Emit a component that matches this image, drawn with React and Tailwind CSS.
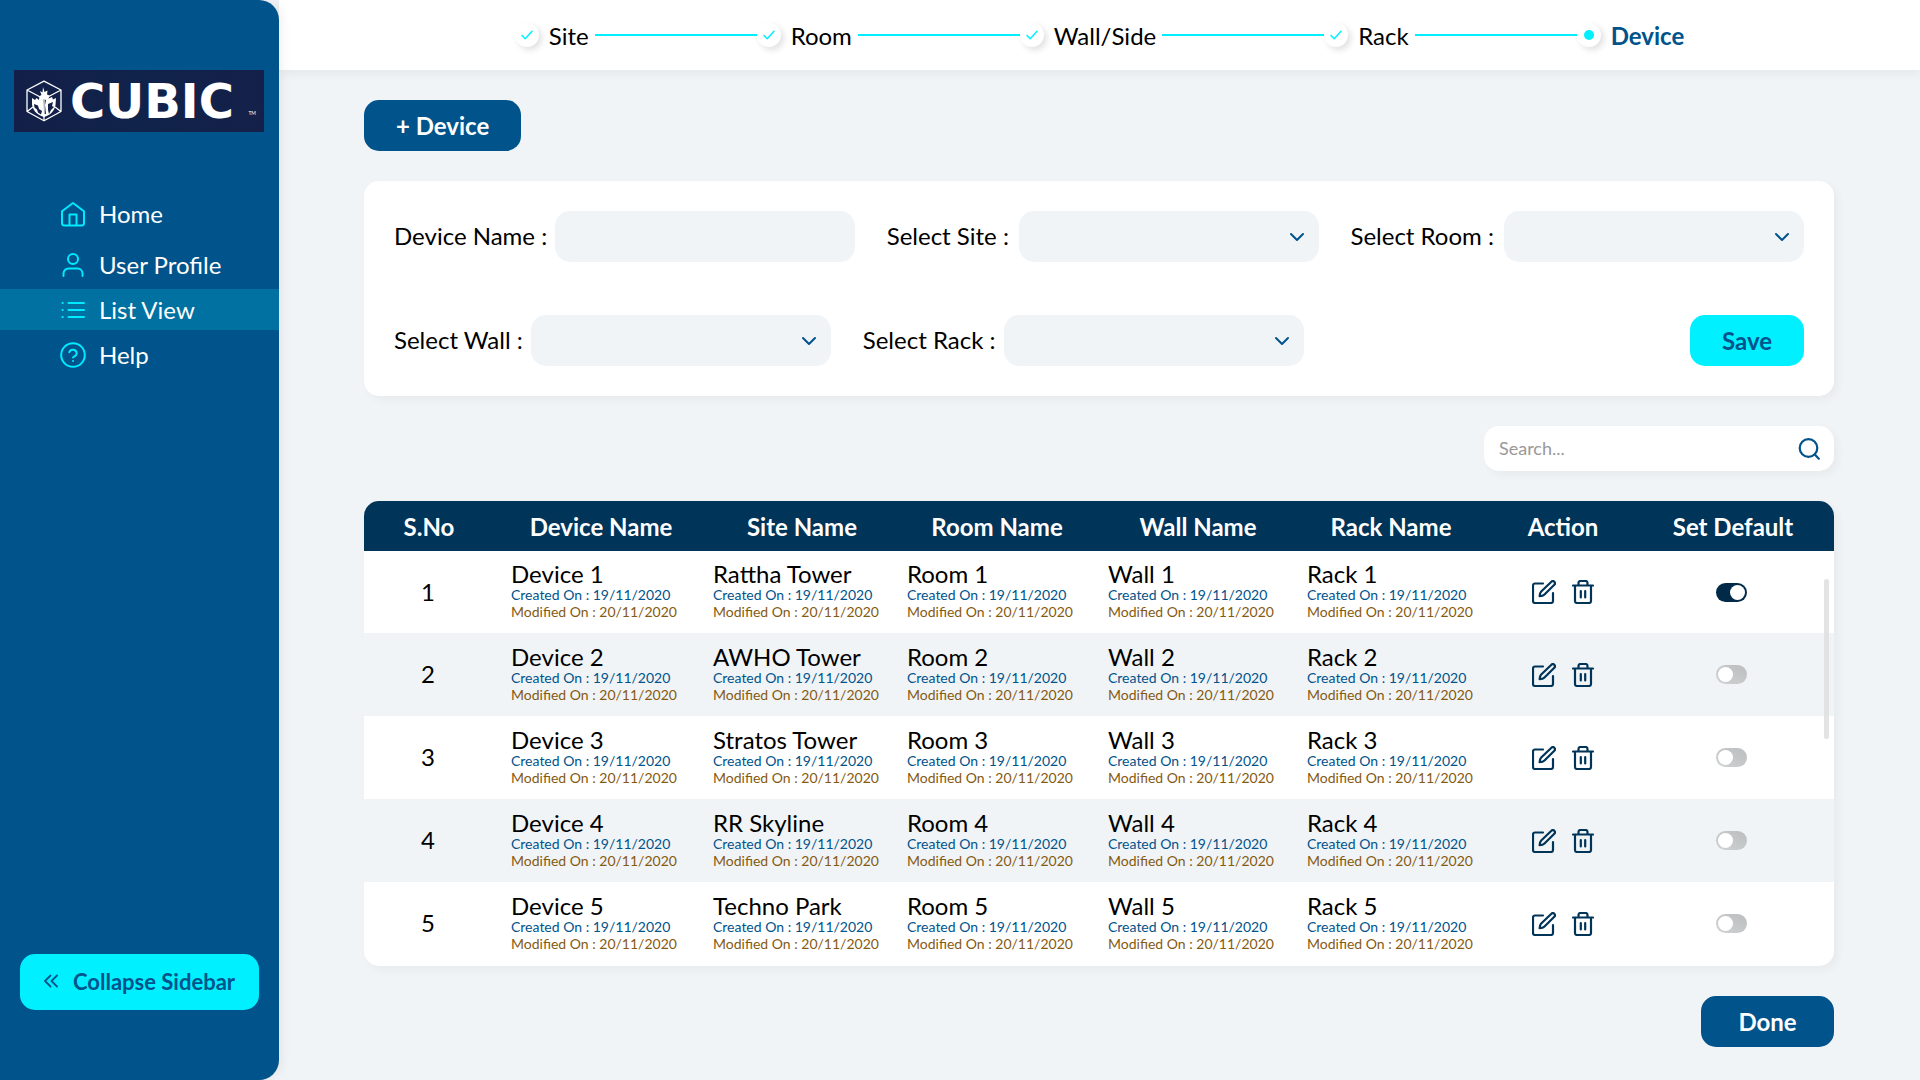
import { useState } from "react";

const steps = ["Site", "Room", "Wall/Side", "Rack", "Device"];

const columns = [
  { title: "S.No", header: "pl-[2px]", width: "w-[128px]" },
  { title: "Device Name", header: "pl-[14px]", width: "w-[204px]" },
  { title: "Site Name", header: "pl-[12px]", width: "w-[200px]" },
  { title: "Room Name", header: "pl-[14px]", width: "w-[188px]" },
  { title: "Wall Name", header: "pl-[14px]", width: "w-[214px]" },
  { title: "Rack Name", header: "pl-[2px]", width: "w-[184px]" },
  { title: "Action", header: "pl-[2px]", width: "w-[160px]" },
  { title: "Set Default", header: "pr-[10px]", width: "w-[192px]" },
];

const sites = ["Rattha Tower", "AWHO Tower", "Stratos Tower", "RR Skyline", "Techno Park"];

function HomeIcon() {
  return (
    <svg viewBox="0 0 26 26" className="size-[26px]" fill="none" stroke="currentColor" strokeWidth="2" strokeLinejoin="round" aria-hidden="true">
      <path d="M2 10.200 13 2l11 8.200V22a2.500 2.500 0 0 1-2.500 2.500h-17A2.500 2.500 0 0 1 2 22z" />
      <path d="M9.500 24.500V13.500h7v11" />
    </svg>
  );
}

function UserIcon() {
  return (
    <svg viewBox="0 0 26 26" className="size-[26px]" fill="none" stroke="currentColor" strokeWidth="2" strokeLinecap="round" aria-hidden="true">
      <circle cx="13" cy="7" r="5" />
      <path d="M3.500 24v-2.500A5 5 0 0 1 8.500 16.500h9a5 5 0 0 1 5 5V24" />
    </svg>
  );
}

function ListIcon() {
  return (
    <svg viewBox="0 0 26 26" className="size-[26px]" fill="none" stroke="currentColor" strokeWidth="2" strokeLinecap="round" aria-hidden="true">
      <path d="M8.500 6H24M8.500 13H24M8.500 20H24M2.500 6h.3M2.500 13h.3M2.500 20h.3" />
    </svg>
  );
}

function HelpIcon() {
  return (
    <svg viewBox="0 0 26 26" className="size-[26px]" fill="none" stroke="currentColor" strokeWidth="2" strokeLinecap="round" strokeLinejoin="round" aria-hidden="true">
      <circle cx="13" cy="13" r="11.800" />
      <path d="M9.300 10.300a3.800 3.800 0 0 1 7.400 1.200c0 2.500-3.700 3.200-3.700 4M13 19h.01" />
    </svg>
  );
}

function EditIcon() {
  return (
    <svg viewBox="0 0 24 24" className="size-6" fill="none" stroke="currentColor" strokeWidth="2.200" strokeLinecap="round" strokeLinejoin="round" aria-hidden="true">
      <path d="M11 3.500H3a2 2 0 0 0-2 2V21a2 2 0 0 0 2 2h16a2 2 0 0 0 2-2v-8" />
      <path d="M19.400 1.800a2 2 0 0 1 2.900 2.900L12.500 14.500c-1 1-3.400 1.600-4.900 1.700.1-1.500.6-3.700 1.600-4.700z" />
    </svg>
  );
}

function TrashIcon() {
  return (
    <svg viewBox="0 0 22 24" className="h-6 w-[22px]" fill="none" stroke="currentColor" strokeWidth="2.200" strokeLinecap="round" strokeLinejoin="round" aria-hidden="true">
      <path d="M1 5.500h20M6.500 5.500V3a2 2 0 0 1 2-2h5a2 2 0 0 1 2 2v2.500M3 5.500V21a2 2 0 0 0 2 2h12a2 2 0 0 0 2-2V5.500M8.800 11v6.500M13.200 11v6.500" />
    </svg>
  );
}

function SearchIcon() {
  return (
    <svg viewBox="0 0 22 22" className="size-[22px]" fill="none" stroke="currentColor" strokeWidth="2.200" strokeLinecap="round" aria-hidden="true">
      <circle cx="10.500" cy="10" r="8.800" />
      <path d="m16.800 16.500 4 4.200" />
    </svg>
  );
}

function CubeMark() {
  return (
    <svg viewBox="0 0 36 42" className="h-[42px] w-9 shrink-0" fill="none" aria-hidden="true">
      <path fill="#fff" d="M18 37c-6-1.500-11-6-12-12.500L6 18l3 2 1.500-2 2.500 2 .5-4 2-1-1.500-4 2.500 1.500L17 7l1.500 5 3-1.500-.5 4 2.500 1-1 3 3.500-1.500 1 2.500L30 18l-.5 7C28.500 31 24 35.500 18 37z" />
      <path fill="#131f48" d="m8 24 4 1.500 1 3.500 3 2-1 3.500-3-2-1-3-2.500-2zM17 19l3 1-1 5 1 9h-2l-.5-9zM22 24l5-2-1 4 2 1-3 3-2 4-1-4z" />
      <path stroke="#fff" strokeWidth="1.300" strokeLinejoin="round" d="M18 1.200 35 10v21.500L18 40.800 1 31.500V10zM1 10l17 9 17-9M18 19v21M1 31.500 7 27M35 31.500 29 27" />
    </svg>
  );
}

function Logo() {
  return (
    <div role="img" aria-label="Cubic" className="ml-[14px] mr-[15px] mt-[70px] flex h-[62px] items-center gap-2 overflow-hidden bg-linear-to-r from-[#131f48] via-[#10234a] to-[#142049] pl-3 pr-2 text-white">
      <CubeMark />
      <span className="font-['DejaVu_Sans','Liberation_Sans',sans-serif] text-5xl font-bold leading-none">CUBIC</span>
      <span className="ml-auto self-end pb-4 text-[5px] leading-none">TM</span>
    </div>
  );
}

const navItems = [
  { label: "Home", icon: HomeIcon, style: "mb-[10px]" },
  { label: "User Profile", icon: UserIcon, style: "mb-1" },
  { label: "List View", icon: ListIcon, style: "mb-1 bg-[#0071a1]", current: true },
  { label: "Help", icon: HelpIcon, style: "" },
];

function Sidebar() {
  return (
    <aside className="z-10 flex w-[279px] shrink-0 flex-col rounded-r-[20px] bg-[#00538b] shadow-[4px_0_10px_rgba(0,0,0,0.05)]">
      <Logo />
      <nav className="mt-[61px]">
        <ul>
          {navItems.map(({ label, icon: Icon, style, current }) => (
            <li key={label} className={style}>
              <a href="#" aria-current={current ? "page" : undefined} className="flex h-[41px] items-center gap-[13px] pl-[60px] text-white">
                <span className="text-[#00eaff]"><Icon /></span>
                {label}
              </a>
            </li>
          ))}
        </ul>
      </nav>
      <button type="button" className="mx-5 mt-auto mb-[70px] flex h-14 items-center gap-[15px] rounded-[15px] bg-[#00f0ff] pb-[2px] pl-6 text-[22px] font-bold text-[#00538b]">
        <svg viewBox="0 0 14 14" className="size-[14px]" fill="none" stroke="currentColor" strokeWidth="1.800" strokeLinecap="round" strokeLinejoin="round" aria-hidden="true">
          <path d="m6.500 1.500-5.500 5.500 5.500 5.500M13 1.500 7.500 7l5.500 5.500" />
        </svg>
        Collapse Sidebar
      </button>
    </aside>
  );
}

function Stepper() {
  return (
    <header className="flex h-[70px] shrink-0 items-center justify-center bg-white shadow-[0_4px_10px_rgba(0,0,0,0.05)]">
      <ol className="flex items-center">
        {steps.map((step, i) => {
          const last = i === steps.length - 1;
          return (
            <li key={step} className="flex items-center">
              <span className="flex size-6 items-center justify-center rounded-full bg-white shadow-[3px_3px_6px_rgba(0,0,0,0.12)]">
                {last ? (
                  <span className="size-[10px] rounded-full bg-[#00f0ff]" />
                ) : (
                  <svg viewBox="0 0 12 10" className="h-[10px] w-3" fill="none" stroke="#00f0ff" strokeWidth="1.500" strokeLinecap="round" strokeLinejoin="round" aria-hidden="true">
                    <path d="M1 5.500 4.200 8.700 11 1.200" />
                  </svg>
                )}
              </span>
              <span className={last ? "ml-[10px] font-bold text-[#00538b]" : "ml-[10px]"}>{step}</span>
              {!last && <span className="ml-[6px] h-[2px] w-[162px] bg-[#00f0ff]" />}
            </li>
          );
        })}
      </ol>
    </header>
  );
}

function SelectField({ id, label, gap = "gap-2" }) {
  return (
    <div className={`flex items-center ${gap}`}>
      <label htmlFor={id} className="pb-[2px]">{label}</label>
      <div className="relative">
        <select id={id} className="block h-[51px] w-[300px] appearance-none rounded-[15px] bg-[#f0f4f7] px-4 pr-10">
          <option></option>
        </select>
        <svg viewBox="0 0 16 10" className="pointer-events-none absolute right-[14px] top-[21px] h-[10px] w-4" fill="none" stroke="#00538b" strokeWidth="2" strokeLinecap="round" strokeLinejoin="round" aria-hidden="true">
          <path d="m2 2 6 6 6-6" />
        </svg>
      </div>
    </div>
  );
}

function DeviceForm() {
  return (
    <form onSubmit={(e) => e.preventDefault()} className="mt-[30px] flex flex-col gap-[53px] rounded-[15px] bg-white p-[30px] shadow-[4px_4px_10px_rgba(0,0,0,0.04)]">
      <div className="flex items-center justify-between">
        <div className="flex items-center gap-2">
          <label htmlFor="device-name" className="pb-[2px]">Device Name :</label>
          <input id="device-name" type="text" className="h-[51px] w-[300px] rounded-[15px] bg-[#f0f4f7] px-4" />
        </div>
        <SelectField id="site" label="Select Site :" gap="gap-[10px]" />
        <SelectField id="room" label="Select Room :" gap="gap-[10px]" />
      </div>
      <div className="flex items-center gap-8">
        <SelectField id="wall" label="Select Wall :" />
        <SelectField id="rack" label="Select Rack :" />
        <button type="submit" className="ml-auto h-[51px] rounded-[15px] bg-[#00f0ff] px-8 font-bold text-[#00538b]">Save</button>
      </div>
    </form>
  );
}

function InfoCell({ title }) {
  return (
    <td className="pb-[2px]">
      <div className="mx-auto w-[166px] whitespace-nowrap">
        <div className="leading-6">{title}</div>
        <div className="text-sm leading-[17px] text-[#00538b]">Created On : 19/11/2020</div>
        <div className="text-sm leading-[17px] text-[#855a11]">Modified On : 20/11/2020</div>
      </div>
    </td>
  );
}

function DeviceTable() {
  const [selected, setSelected] = useState(0);
  return (
    <div className="relative mt-[30px] overflow-hidden rounded-[15px] bg-white pb-px shadow-[4px_4px_10px_rgba(0,0,0,0.04)]">
      <table className="w-full table-fixed">
        <colgroup>
          {columns.map((c) => (
            <col key={c.title} className={c.width} />
          ))}
        </colgroup>
        <thead>
          <tr className="h-[50px] bg-[#003458] text-white">
            {columns.map((c) => (
              <th key={c.title} scope="col" className={c.header}>{c.title}</th>
            ))}
          </tr>
        </thead>
        <tbody>
          {sites.map((site, i) => {
            const n = i + 1;
            return (
              <tr key={site} className="h-[83px] first:h-[82px] even:bg-[#f0f4f7]">
                <td className="pb-[2px] text-center">{n}</td>
                <InfoCell title={`Device ${n}`} />
                <InfoCell title={site} />
                <InfoCell title={`Room ${n}`} />
                <InfoCell title={`Wall ${n}`} />
                <InfoCell title={`Rack ${n}`} />
                <td className="pl-[2px]">
                  <div className="flex items-center justify-center gap-4 text-[#003458]">
                    <button type="button" aria-label={`Edit device ${n}`}><EditIcon /></button>
                    <button type="button" aria-label={`Delete device ${n}`}><TrashIcon /></button>
                  </div>
                </td>
                <td className="pr-[14px]">
                  <input
                    type="checkbox"
                    role="switch"
                    aria-label={`Set device ${n} as default`}
                    checked={selected === i}
                    onChange={() => setSelected(selected === i ? -1 : i)}
                    className="mx-auto flex h-[19px] w-[31px] appearance-none items-center rounded-full bg-linear-to-bl from-[#bbbdbf] to-[#d0d3d4] px-[2px] before:size-[15px] before:rounded-full before:bg-white checked:justify-end checked:from-[#002a47] checked:to-[#002a47]"
                  />
                </td>
              </tr>
            );
          })}
        </tbody>
      </table>
      <div className="absolute right-[5px] top-[78px] h-40 w-[5px] rounded-full bg-[#dedede]/85" />
    </div>
  );
}

export default function App() {
  return (
    <div className="flex min-h-screen bg-[#f0f4f7] font-['Lato',sans-serif] text-2xl leading-[29px] text-black">
      <Sidebar />
      <div className="flex min-w-0 flex-1 flex-col">
        <Stepper />
        <main className="flex flex-col pt-[30px] pr-[86px] pb-[33px] pl-[85px]">
          <button type="button" className="h-[51px] self-start rounded-[15px] bg-[#00538b] px-8 font-bold text-white">+ Device</button>
          <DeviceForm />
          <div className="mt-[30px] flex h-[45px] w-[350px] items-center self-end rounded-[15px] bg-white pr-[14px] pl-[15px] shadow-[4px_4px_10px_rgba(0,0,0,0.04)]">
            <input type="search" aria-label="Search" placeholder="Search..." className="min-w-0 flex-1 pb-[2px] text-lg outline-none placeholder:text-[#999]" />
            <button type="button" aria-label="Run search" className="text-[#00538b]"><SearchIcon /></button>
          </div>
          <DeviceTable />
          <button type="button" className="mt-[30px] h-[51px] w-[133px] self-end rounded-[15px] bg-[#00538b] font-bold text-white">Done</button>
        </main>
      </div>
    </div>
  );
}
